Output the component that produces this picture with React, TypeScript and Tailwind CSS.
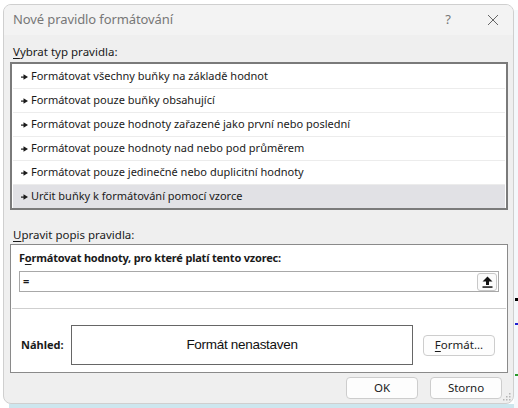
const rules = [
  "Formátovat všechny buňky na základě hodnot",
  "Formátovat pouze buňky obsahující",
  "Formátovat pouze hodnoty zařazené jako první nebo poslední",
  "Formátovat pouze hodnoty nad nebo pod průměrem",
  "Formátovat pouze jedinečné nebo duplicitní hodnoty",
  "Určit buňky k formátování pomocí vzorce",
]

function Pointer() {
  return (
    <svg width="7" height="6" viewBox="0 0 7 6" className="shrink-0">
      <rect x="0" y="2.5" width="4" height="1.2" fill="#1a1a1a" />
      <path d="M2.5 0.3 L7 3.1 L2.5 5.7 Z" fill="#1a1a1a" />
    </svg>
  )
}

export default function App() {
  return (
    <div className="relative h-[408px] w-[518px] overflow-hidden bg-white font-['Noto_Sans',sans-serif] text-[11px] text-[#1a1a1a]">
      {/* excel bits behind the dialog */}
      <div className="absolute right-0 top-[10px] h-[398px] w-[4px] bg-[#f4f8fb]" />
      <div className="absolute right-0 top-[298px] h-[3px] w-[3px] bg-black" />
      <div className="absolute right-0 top-[323px] h-[2px] w-[3px] bg-[#2020d0]" />
      <div className="absolute right-0 top-[374px] h-[2px] w-[3px] bg-[#2a9a2a]" />
      <div className="absolute bottom-0 left-[9px] h-[4px] w-[505px] bg-[#cde6ee]" />

      <div className="relative ml-[3px] mt-[4px] flex h-[400px] w-[511px] flex-col overflow-hidden rounded-[8px] border border-[#cfcfcf] bg-[#efefef]">
        {/* title bar */}
        <div className="flex h-[30px] shrink-0 items-center bg-[#f3f3f3] pl-[9px] pr-[14px]">
          <span className="text-[13px] tracking-[-0.1px] text-[#777]">Nové pravidlo formátování</span>
          <span className="ml-auto mr-[36px] text-[13px] text-[#777]">?</span>
          <svg width="12" height="12" viewBox="0 0 12 12">
            <path d="M1 1 L11 11 M11 1 L1 11" stroke="#666" strokeWidth="1" />
          </svg>
        </div>

        <div className="flex flex-1 flex-col px-[6px]">
          <div className="mt-[8px] h-[17px] pl-[3px] text-[11.5px] leading-[17px]">
            <span className="underline underline-offset-2">V</span>ybrat typ pravidla:
          </div>

          {/* rule list */}
          <div className="mt-[2px] h-[148px] w-[498px] border-2 border-[#7a7a7a] bg-white p-[1px]">
            {rules.map((r, i) => (
              <div
                key={r}
                className={
                  "flex items-center gap-[3px] pl-[8px] " +
                  (i === rules.length - 1 ? "h-[23px] bg-[#e1e1e5]" : "h-[24px] border-b border-[#ececec]")
                }
              >
                <Pointer />
                <span className="text-[11px]">{r}</span>
              </div>
            ))}
          </div>

          <div className="mt-[16px] h-[17px] pl-[3px] text-[11.5px] leading-[17px]">
            <span className="underline underline-offset-2">U</span>pravit popis pravidla:
          </div>

          {/* description panel */}
          <div className="mt-[1px] flex h-[129px] w-[498px] flex-col border border-[#8a8a8a] bg-white">
            <div className="px-[8px] pt-[4px]">
              <div className="h-[18px] font-bold leading-[18px] tracking-[-0.2px]">
                F<span className="underline underline-offset-2">o</span>rmátovat hodnoty, pro které platí tento vzorec:
              </div>
              <div className="mt-[4px] flex h-[21px] w-[480px] items-center border border-[#a8a8a8] pl-[3px] pr-[1px]">
                <span className="font-bold">=</span>
                <div className="ml-auto flex h-[18px] w-[20px] items-center justify-center rounded-[3px] border border-[#c8c8c8] bg-[#fbfbfb]">
                  <svg width="11" height="12" viewBox="0 0 11 12">
                    <path d="M5.5 0.5 L10.5 5.5 L7 5.5 L7 9 L4 9 L4 5.5 L0.5 5.5 Z" fill="#111" />
                    <rect x="0.5" y="10.3" width="10" height="1.5" fill="#111" />
                  </svg>
                </div>
              </div>
            </div>
            <div className="mx-[1px] mt-[16px] h-px bg-[#cfcfcf]" />
            <div className="flex items-center pl-[10px] pr-[10px] pt-[16px]">
              <span className="w-[50px] font-bold">Náhled:</span>
              <div className="flex h-[40px] w-[342px] items-center justify-center border border-[#666] font-['Liberation_Sans',sans-serif] text-[13.5px] tracking-[-0.3px] text-[#111]">
                Formát nenastaven
              </div>
              <button className="ml-[10px] flex h-[21px] w-[72px] items-center justify-center rounded-[4px] border border-[#cdcdcd] bg-[#fdfdfd] text-[11.5px]">
                <span className="underline underline-offset-2">F</span>ormát...
              </button>
            </div>
          </div>

          {/* footer */}
          <div className="mt-[4px] flex justify-end gap-[12px] pr-[5px]">
            <button className="flex h-[22px] w-[72px] items-center justify-center rounded-[4px] border border-[#cdcdcd] bg-[#fdfdfd] text-[11.5px]">
              OK
            </button>
            <button className="flex h-[22px] w-[72px] items-center justify-center rounded-[4px] border border-[#cdcdcd] bg-[#fdfdfd] text-[11.5px]">
              Storno
            </button>
          </div>
        </div>

        {/* resize grip */}
        <svg width="8" height="8" viewBox="0 0 8 8" className="absolute bottom-[2px] right-[2px]">
          <rect x="6" y="0" width="1.5" height="1.5" fill="#b5b5b5" />
          <rect x="3" y="3" width="1.5" height="1.5" fill="#b5b5b5" />
          <rect x="6" y="3" width="1.5" height="1.5" fill="#b5b5b5" />
          <rect x="0" y="6" width="1.5" height="1.5" fill="#b5b5b5" />
          <rect x="3" y="6" width="1.5" height="1.5" fill="#b5b5b5" />
          <rect x="6" y="6" width="1.5" height="1.5" fill="#b5b5b5" />
        </svg>
      </div>
    </div>
  )
}
